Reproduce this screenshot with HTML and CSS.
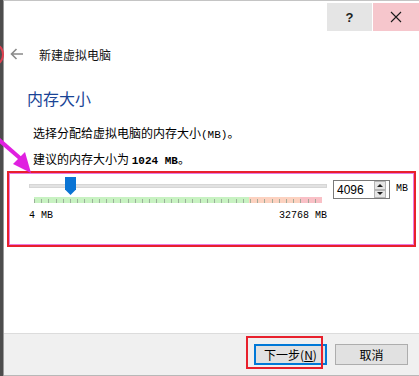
FILE: index.html
```html
<!DOCTYPE html>
<html lang="zh-CN">
<head>
<meta charset="utf-8">
<title>新建虚拟电脑</title>
<link rel="stylesheet" href="styles.css">
</head>
<body>
<div class="screen">
  <div class="window">
    <div class="titlebar">
      <div class="tb-btn help">?</div>
      <div class="tb-btn close">
        <svg width="12" height="12" viewBox="0 0 12 12"><path d="M1 1 L11 11 M11 1 L1 11" stroke="#1a1a1a" stroke-width="1.1" fill="none"/></svg>
      </div>
    </div>
    <div class="header">
      <svg class="back" width="14" height="12" viewBox="0 0 14 12"><path d="M13 6 H1.5 M6.5 1 L1.5 6 L6.5 11" stroke="#8a8a8a" stroke-width="1.6" fill="none"/></svg>
      <span class="header-text">新建虚拟电脑</span>
    </div>
    <div class="page-title">内存大小</div>
    <div class="desc">选择分配给虚拟电脑的内存大小<span class="mono">(MB)</span>。</div>
    <div class="desc second">建议的内存大小为 <b class="mono bold">1024 MB</b>。</div>
    <div class="mem-box">
      <div class="slider-row">
        <div class="slider">
          <div class="groove"></div>
          <div class="handle"></div>
          <div class="ticks">
            <div class="zone green"></div>
            <div class="zone orange"></div>
            <div class="zone red"></div>
          </div>
          <div class="range-labels">
            <span>4 MB</span>
            <span>32768 MB</span>
          </div>
        </div>
        <div class="spinbox">
          <span class="spin-value">4096</span>
          <div class="spin-btns">
            <div class="spin-btn"><span class="tri up"></span></div>
            <div class="spin-btn"><span class="tri down"></span></div>
          </div>
        </div>
        <span class="unit">MB</span>
      </div>
    </div>
    <div class="spacer"></div>
    <div class="footer">
      <div class="btn-wrap">
        <button class="btn primary">下一步(<u>N</u>)</button>
        <div class="mark-rect"></div>
      </div>
      <button class="btn">取消</button>
    </div>
  </div>
  <div class="mark-circle"></div>
  <svg class="mark-arrow" width="40" height="45" viewBox="0 0 40 45">
    <path d="M-2 4 L21 24" stroke="#e020e0" stroke-width="4" fill="none"/>
    <polygon points="31,38 13,29 25,17" fill="#e020e0"/>
  </svg>
</div>
</body>
</html>
```

FILE: styles.css
```css
* { box-sizing: border-box; }
html, body { margin: 0; padding: 0; }
body {
  font-family: "Noto Sans CJK SC", sans-serif;
  font-size: 12px;
  color: #000;
  background: #fff;
}
.screen {
  position: relative;
  width: 419px;
  height: 376px;
  display: flex;
  background: #4d4d4d;
  overflow: hidden;
}
.window {
  flex: 1;
  margin-left: 3px;
  border-left: 1px solid #9a9a9a;
  border-top: 1px solid #c4c4c4;
  background: #fff;
  display: flex;
  flex-direction: column;
}
.titlebar {
  height: 30px;
  padding-top: 2px;
  display: flex;
  justify-content: flex-end;
  gap: 1px;
}
.tb-btn {
  width: 45px;
  height: 28px;
  display: flex;
  align-items: center;
  justify-content: center;
}
.help {
  background: #e5e5e5;
  font-family: "Liberation Sans", sans-serif;
  font-weight: bold;
  font-size: 13px;
  color: #222;
}
.close { width: 46px; background: #f6c6cc; }
.header {
  margin-top: 11px;
  height: 24px;
  display: flex;
  align-items: center;
  padding-left: 6px;
}
.back { margin-right: 15px; }
.header-text { font-size: 12px; color: #111; }
.page-title {
  margin-top: 22px;
  height: 20px;
  line-height: 20px;
  padding-left: 23px;
  font-size: 16px;
  color: #1a4496;
}
.desc {
  margin-top: 17px;
  height: 16px;
  line-height: 16px;
  padding-left: 29px;
}
.desc.second { margin-top: 10px; }
.mono { font-family: "Liberation Mono", monospace; font-size: 11px; }
.bold { font-weight: bold; }
.mem-box {
  margin-top: 4px;
  margin-left: 3px;
  width: 409px;
  height: 76px;
  border: 2px solid #e8202c;
  box-shadow: inset 0 0 0 1px #e87ae0;
  padding: 4px 0 0 20px;
}
.slider-row { display: flex; align-items: flex-start; }
.slider {
  position: relative;
  width: 298px;
}
.groove {
  margin-top: 7px;
  height: 4px;
  background: #e2e2e2;
  border: 1px solid #d6d6d6;
}
.handle {
  position: absolute;
  left: 36px;
  top: 0;
  width: 11px;
  height: 18px;
  background: #0a74d4;
  clip-path: polygon(0 0, 100% 0, 100% 70%, 50% 100%, 0 70%);
}
.ticks {
  margin-top: 9px;
  margin-left: 5px;
  width: 288px;
  height: 6px;
  display: flex;
  position: relative;
}
.ticks::after {
  content: "";
  position: absolute;
  left: 0; right: 0; top: 2px; bottom: 0;
  background: repeating-linear-gradient(to right, #8fa08f 0, #8fa08f 1px, transparent 1px, transparent 7.2px);
  opacity: 0.8;
}
.zone { height: 100%; }
.green { width: 215px; background: #c8f2c2; }
.orange { width: 51px; background: #fcd2c0; }
.red { width: 22px; background: #f9c0c6; }
.range-labels {
  margin-top: 7px;
  display: flex;
  justify-content: space-between;
  font-family: "Liberation Mono", monospace;
  font-size: 10px;
  line-height: 12px;
  padding-left: 0;
}
.spinbox {
  margin-left: 6px;
  margin-top: 3px;
  width: 57px;
  height: 19px;
  border: 1px solid #7a7a7a;
  background: #fff;
  display: flex;
  align-items: center;
  padding-left: 3px;
}
.spin-value {
  flex: 1;
  font-family: "Liberation Sans", sans-serif;
  font-size: 12px;
}
.spin-btns {
  width: 12px;
  height: 17px;
  margin-right: 3px;
  display: flex;
  flex-direction: column;
}
.spin-btn {
  flex: 1;
  background: #e6e6e6;
  border: 1px solid #b5b5b5;
  display: flex;
  align-items: center;
  justify-content: center;
}
.tri { width: 0; height: 0; border-left: 3px solid transparent; border-right: 3px solid transparent; }
.tri.up { border-bottom: 3px solid #222; }
.tri.down { border-top: 3px solid #222; }
.unit {
  margin-left: 6px;
  margin-top: 6px;
  font-family: "Liberation Mono", monospace;
  font-size: 10px;
}
.spacer { flex: 1; }
.footer {
  height: 43px;
  border-top: 1px solid #dcdcdc;
  border-bottom: 1px solid #b8b8b8;
  background: #f0f0f0;
  display: flex;
  justify-content: flex-end;
  align-items: flex-start;
  gap: 8px;
  padding: 10px 11px 0 0;
}
.btn-wrap { position: relative; }
.btn {
  width: 73px;
  height: 21px;
  padding: 0;
  background: #e1e1e1;
  border: 1px solid #adadad;
  font-family: "Noto Sans CJK SC", sans-serif;
  font-size: 12px;
  color: #000;
}
.btn.primary { border: 2px solid #0078d7; }
.mark-rect {
  position: absolute;
  left: -8px;
  top: -8px;
  width: 77px;
  height: 33px;
  border: 2px solid #e8202c;
}
.mark-circle {
  position: absolute;
  left: -17px;
  top: 43px;
  width: 21px;
  height: 23px;
  border: 2px solid #e04050;
  border-radius: 50%;
}
.mark-arrow {
  position: absolute;
  left: 0;
  top: 135px;
}
```
